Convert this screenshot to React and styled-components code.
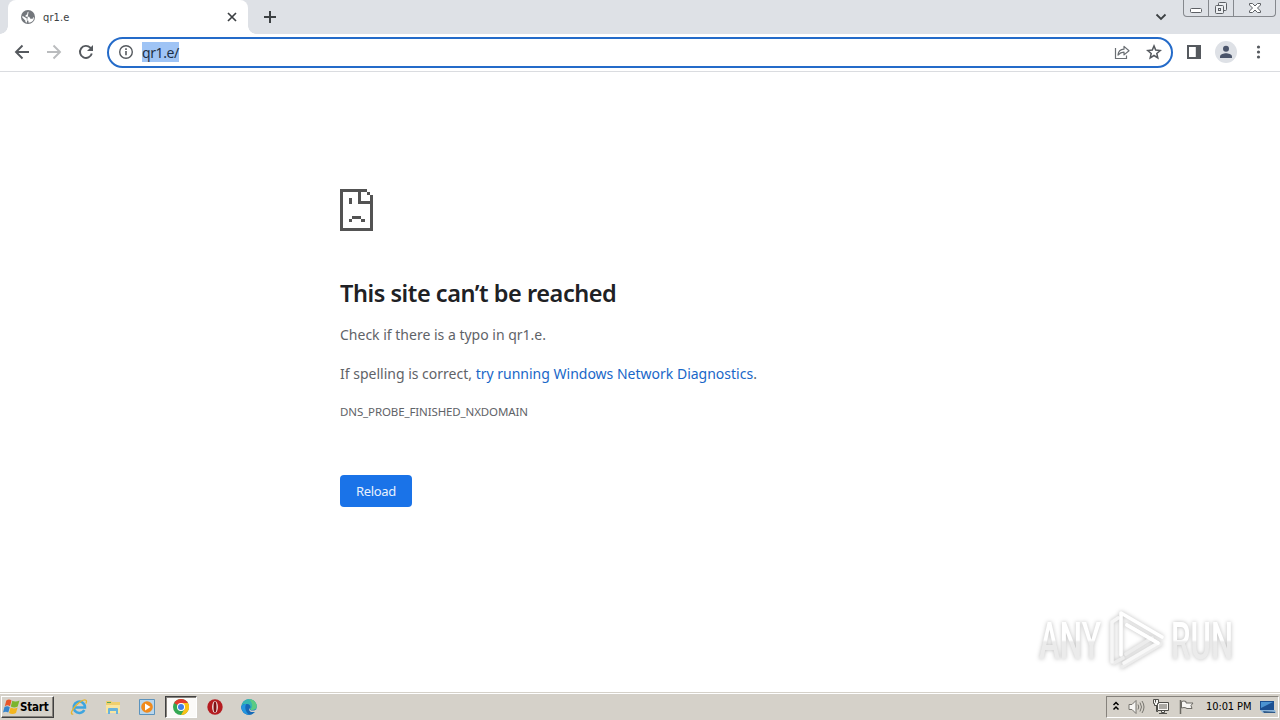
import styled, { createGlobalStyle } from 'styled-components';

const GlobalStyle = createGlobalStyle`
  * {
    box-sizing: border-box;
  }
  body {
    margin: 0;
    overflow: hidden;
    background: #fff;
  }
  svg {
    display: block;
    flex: none;
  }
`;

const ui = `'Noto Sans', 'Open Sans', sans-serif`;
const tahoma = `'DejaVu Sans Condensed', 'DejaVu Sans', sans-serif`;

const Screen = styled.div`
  display: flex;
  flex-direction: column;
  width: 1280px;
  height: 720px;
  font-family: ${ui};
`;

const TabStrip = styled.header`
  display: flex;
  height: 34px;
  padding-left: 8px;
  background: #dee1e6;
`;

const Tab = styled.div`
  position: relative;
  display: flex;
  align-items: center;
  width: 240px;
  padding: 0 9px 0 12px;
  background: #fff;
  border-radius: 8px 8px 0 0;

  &::before,
  &::after {
    content: '';
    position: absolute;
    bottom: 0;
    width: 8px;
    height: 8px;
  }
  &::before {
    left: -8px;
    background: radial-gradient(circle at 0 0, transparent 7.5px, #fff 8px);
  }
  &::after {
    right: -8px;
    background: radial-gradient(circle at 100% 0, transparent 7.5px, #fff 8px);
  }
`;

const TabTitle = styled.span`
  flex: 1;
  margin-left: 7px;
  padding-top: 1px;
  font-family: ${tahoma};
  font-size: 11px;
  line-height: 14px;
  letter-spacing: 0.1px;
  color: #3c4043;
`;

const NewTab = styled.div`
  display: flex;
  align-items: center;
  margin-left: 14px;
`;

const StripEnd = styled.div`
  display: flex;
  align-items: flex-start;
  gap: 14px;
  margin-left: auto;
  padding-right: 4px;
`;

const Chevron = styled.div`
  padding-top: 9px;
`;

const WindowButtons = styled.div`
  display: flex;
  width: 93px;
  height: 17px;
  border: 1px solid #85888d;
  border-top: 0;
  border-radius: 0 0 4px 4px;
`;

const WindowButton = styled.div`
  display: flex;
  justify-content: center;
  width: ${(props) => props.$width}px;

  & + & {
    border-left: 1px solid #85888d;
  }
`;

const Toolbar = styled.div`
  display: flex;
  align-items: center;
  height: 38px;
  padding: 0 12px;
  border-bottom: 1px solid #dadce0;
`;

const Nav = styled.div`
  display: flex;
  gap: 12px;
  margin-right: 11px;
  padding-bottom: 2px;
`;

const AddressBar = styled.div`
  display: flex;
  align-items: center;
  width: 1066px;
  height: 31px;
  padding: 0 8px 1px 9px;
  border: 2px solid #246bc9;
  border-radius: 16px;
`;

const Url = styled.span`
  height: 20px;
  margin: 0 auto 0 8px;
  font-size: 14px;
  line-height: 21px;
  letter-spacing: -0.42px;
  color: #1d3045;
  background: #9fc4f5;
`;

const AddressActions = styled.div`
  display: flex;
  gap: 14px;
`;

const ToolbarEnd = styled.div`
  display: flex;
  align-items: center;
  margin-left: 12px;
  padding-bottom: 1px;
  gap: 12px;
`;

const Page = styled.main`
  flex: 1;
  padding: 117px 0 0 340px;
  color: #5f6368;
`;

const Title = styled.h1`
  margin: 46px 0 0;
  font-size: 23.5px;
  font-weight: 600;
  line-height: 32px;
  letter-spacing: -0.45px;
  color: #202124;
`;

const Line = styled.p`
  margin: ${(props) => props.$top}px 0 0;
  font-size: 14px;
  line-height: 24px;
`;

const Link = styled.a`
  color: #1967c8;
`;

const ErrorCode = styled.div`
  margin-top: 16px;
  font-size: 11.5px;
  line-height: 20px;
  letter-spacing: -0.12px;
`;

const Reload = styled.button`
  display: block;
  width: 72px;
  height: 32px;
  margin-top: 53px;
  padding: 0;
  border: 0;
  border-radius: 4px;
  background: #1a73e8;
  color: #e8f1fd;
  font-family: ${ui};
  font-size: 13px;
  letter-spacing: -0.3px;
`;

const Watermark = styled.div`
  position: absolute;
  left: 1037px;
  top: 605px;
  display: flex;
  align-items: flex-start;
  gap: 4px;
  filter: drop-shadow(0 0 2px rgba(0, 0, 0, 0.26));
`;

const Taskbar = styled.footer`
  display: flex;
  align-items: center;
  height: 28px;
  padding: 0 0 0 1px;
  background: #d5d1c9;
  border-top: 1px solid #d5d1c9;
  box-shadow: inset 0 1px #fff;
`;

const StartButton = styled.div`
  display: flex;
  align-items: center;
  width: 53px;
  height: 22px;
  padding-left: 1px;
  border: 1px solid;
  border-color: #fff #404040 #404040 #fff;
  box-shadow: inset -1px -1px #86827c;
  font: bold 11.5px/14px ${tahoma};
  letter-spacing: -0.2px;
  color: #000;
`;

const Launchers = styled.div`
  display: flex;
  align-items: center;
  margin-left: 9px;
  gap: 2px;
`;

const Launcher = styled.div`
  display: flex;
  align-items: center;
  justify-content: center;
  width: 32px;
  height: 22px;
  border: 1px solid transparent;
  ${(props) =>
    props.$active &&
    `
    background: #fbfaf8;
    border-color: #404040 #fff #fff #404040;
    box-shadow: inset 1px 1px #86827c;
  `}
`;

const Tray = styled.div`
  display: flex;
  align-items: center;
  width: 173px;
  height: 22px;
  margin: 0 1px 0 auto;
  padding-left: 5px;
  border: 1px solid;
  border-color: #86827c #fff #fff #86827c;
`;

const TrayIcons = styled.div`
  display: flex;
  align-items: center;
  gap: 8px;
`;

const Clock = styled.span`
  width: 47px;
  margin: 0 6px 0 11px;
  padding-top: 1px;
  font: 11px/14px ${tahoma};
  letter-spacing: -0.1px;
  color: #000;
  white-space: nowrap;
`;

const Globe = () => (
  <svg width="16" height="16" viewBox="0 0 16 16">
    <circle cx="8" cy="8" r="7" fill="#73777c" />
    <path
      d="M8.600 2.400 7.200 3.800l.2 1.400-1.800 1v1.500h3.600l1.200 2h2.200l1-1.700.4.500a5.800 5.800 0 0 1-5.400 5.300l-.2-2-1.600-.6V9.400L3.200 7.300l-1-.1.100 1.200 3 3 .2 1.700 1.300.6"
      fill="#fff"
    />
  </svg>
);

const Close = () => (
  <svg width="14" height="14" viewBox="0 0 14 14" stroke="#3c4043" strokeWidth="1.7">
    <path d="m3 3 8 8M11 3l-8 8" />
  </svg>
);

const Plus = () => (
  <svg width="16" height="16" viewBox="0 0 16 16" stroke="#3c4043" strokeWidth="2">
    <path d="M8 2v12M2 8h12" />
  </svg>
);

const Arrow = ({ color, back }) => (
  <svg width="20" height="20" viewBox="0 0 20 20" fill="none" stroke={color} strokeWidth="1.9">
    <path d={back ? 'M17 10H4M10.500 3.500 4 10l6.500 6.500' : 'M3 10h13M9.500 3.500 16 10l-6.500 6.500'} />
  </svg>
);

const ReloadIcon = () => (
  <svg width="20" height="20" viewBox="0 0 20 20" fill="none" stroke="#55595e" strokeWidth="1.9">
    <path d="M15.800 11.500a6 6 0 1 1-1.500-5.800L16 7.400" />
    <path d="M17 3v6h-6z" fill="#55595e" stroke="none" />
  </svg>
);

const Info = () => (
  <svg width="16" height="16" viewBox="0 0 16 16" fill="none" stroke="#55595e">
    <circle cx="8" cy="8" r="6.3" strokeWidth="1.4" />
    <path d="M8 7v4.300M8 4.200v1.700" strokeWidth="1.6" />
  </svg>
);

const Share = () => (
  <svg width="18" height="18" viewBox="0 0 18 18" fill="none" stroke="#6b6f74" strokeWidth="1.2">
    <path d="M2.500 5v10.500h11v-3" />
    <path d="M5 12c.3-3.800 2.500-5.600 6-5.800V3.400l5 4.300-5 4.200V9.200c-2.800 0-4.300.9-6 2.800Z" strokeLinejoin="round" />
  </svg>
);

const Star = () => (
  <svg width="18" height="18" viewBox="0 0 18 18" fill="none" stroke="#55595e" strokeWidth="1.5">
    <path d="m9 2.900 1.700 4.200 4.500.4-3.400 3 1 4.400L9 12.500l-3.800 2.400 1-4.400-3.400-3 4.500-.4Z" />
  </svg>
);

const SidePanel = () => (
  <svg width="18" height="18" viewBox="0 0 18 18">
    <path d="M2 2h14v14H2zM4 4v10h6.800V4z" fill="#55595e" fillRule="evenodd" />
  </svg>
);

const Profile = () => (
  <svg width="22" height="22" viewBox="0 0 22 22">
    <circle cx="11" cy="11" r="11" fill="#dee1e6" />
    <circle cx="11" cy="7.8" r="3" fill="#4b556b" />
    <path d="M5 17v-1.600c0-2 4-3.200 6-3.200s6 1.200 6 3.200V17z" fill="#4b556b" />
  </svg>
);

const Menu = () => (
  <svg width="18" height="18" viewBox="0 0 18 18" fill="#55595e">
    <circle cx="9.5" cy="4" r="1.6" />
    <circle cx="9.5" cy="9" r="1.6" />
    <circle cx="9.5" cy="14" r="1.6" />
  </svg>
);

const SadPage = () => (
  <svg width="33" height="42" viewBox="0 0 33 42" fill="#535353" shapeRendering="crispEdges">
    <path d="M0 0h27v3h-6v9h12v30H0zM3 3v36h27V15H18V3z" fillRule="evenodd" />
    <path d="M27 3h3v3h-3zM30 6h3v6h-3zM9 9h3v6H9zM12 27h9v3h-9zM9 30h3v3H9zM21 30h4v3h-4z" />
  </svg>
);

const WatermarkWord = ({ children }) => (
  <svg width="66" height="74" viewBox="0 0 66 74">
    <defs>
      <linearGradient id="word" gradientUnits="userSpaceOnUse" x1="0" y1="35" x2="0" y2="37">
        <stop offset="0" stopColor="#fff" />
        <stop offset="1" stopColor="#ebebeb" />
      </linearGradient>
    </defs>
    <text
      transform="translate(2 54) scale(0.62 1) translate(0 -54)"
      x="0"
      y="54"
      textLength="100"
      lengthAdjust="spacingAndGlyphs"
      fontFamily="Roboto, sans-serif"
      fontSize="51"
      fontWeight="500"
      fill="url(#word)"
    >
      {children}
    </text>
  </svg>
);

const WatermarkPlay = () => (
  <svg width="58" height="66" viewBox="0 0 58 66" fill="none" strokeWidth="3.600" strokeLinejoin="round" strokeLinecap="round">
    <path d="M15 62 54 39M7 58l9-5M19 49l26-16" stroke="#ececec" />
    <path d="M5 57V17l6-4" stroke="#f6f6f6" />
    <path d="M14 50V8l41 24" stroke="#fff" />
    <path d="m20 20 31 18-34 20" stroke="#f8f8f8" />
    <path d="m20 20 31 18" stroke="#fff" />
  </svg>
);

const WindowsFlag = () => (
  <svg width="17" height="16" viewBox="0 0 17 16">
    <path d="M3.300 1.500C5.300 0 7 .4 8.500 1.400L7 7.300C5.200 6 3.700 6.100 1.800 7.200z" fill="#e9562a" />
    <path d="M9.300 1.800c2 1.200 4.600 1 7.200-.2l-1.800 6c-2.500 1.300-4.800 1.100-6.900 0z" fill="#7bb52e" />
    <path d="M1.500 8c2-1.200 3.600-1 5.300.2l-1.500 5.400C3.600 12.500 2 12.500 0 13.500z" fill="#3685cd" />
    <path d="M7.600 8.600c2 1.200 4.500 1 7-.1L13 14c-2.500 1.300-4.900 1.100-7 0z" fill="#f3b51e" />
  </svg>
);

const Explorer = () => (
  <svg width="18" height="18" viewBox="0 0 18 18" fill="none">
    <path d="M14.300 12A5.700 5.700 0 1 1 15 9.500H5" stroke="#3ea5df" strokeWidth="2.500" />
    <path d="M3.200 15.800c-2 1-2.500-.8-.6-4C5.500 7 13 .500 15.900 2.300c1 .7.6 2.100-.2 3.200" stroke="#e6b52e" strokeWidth="1.300" />
  </svg>
);

const Folder = () => (
  <svg width="18" height="18" viewBox="0 0 18 18">
    <path d="M2 3h5l1 1h8v10H2z" fill="#efcf6d" />
    <path d="M3 4h4v1H3z" fill="#57a65a" />
    <path d="M2 7h14v8H2z" fill="#f8e5a0" />
    <path d="M4 16v-5q0-1 1-1h8q1 0 1 1v5h-2v-3H6v3z" fill="#68b3dc" />
  </svg>
);

const MediaPlayer = () => (
  <svg width="18" height="18" viewBox="0 0 18 18">
    <path d="M1.500 1.500h15v15h-15z" fill="#b9d6ec" stroke="#5b93bd" />
    <circle cx="9" cy="9" r="5.8" fill="#f08a1c" />
    <path d="m7 5.500 5.500 3.500L7 12.500z" fill="#fff" />
  </svg>
);

const Chrome = () => (
  <svg width="16" height="16" viewBox="0 0 16 16">
    <circle cx="8" cy="8" r="8" fill="#34a853" />
    <path d="M8 8 1.100 4A8 8 0 0 1 15 4H8z" fill="#e33b2e" />
    <path d="M8 4h7a8 8 0 0 1-7 12l3.500-6z" fill="#fbc116" />
    <circle cx="8" cy="8" r="4" fill="#fff" />
    <circle cx="8" cy="8" r="3" fill="#3f7fe8" />
  </svg>
);

const Opera = () => (
  <svg width="16" height="16" viewBox="0 0 16 16">
    <circle cx="8" cy="8" r="7.7" fill="#b51c20" />
    <ellipse cx="8" cy="8" rx="2.900" ry="6.100" fill="#f3e5e3" />
    <ellipse cx="8" cy="8" rx="1.500" ry="5.600" fill="#7f1115" />
  </svg>
);

const Edge = () => (
  <svg width="16" height="16" viewBox="0 0 16 16">
    <circle cx="8" cy="8" r="7.7" fill="#1686d0" />
    <path d="M.4 8C1 2.800 4.200.3 8 .3c4.300 0 7.700 3 7.700 6.700 0 2.700-2 4-4.400 4-1.700 0-2.800-.7-2.300-1.500C10.500 7 8 5 5.500 5S1 6.200.4 8Z" fill="#36b6b0" />
    <path d="M8 .3c4.300 0 7.700 3 7.700 6.700 0 2.700-2 4-4.400 4-1 0-1.700-.2-2.100-.6C12 9 12 4 8 .3Z" fill="#5bcb83" />
    <path d="M.4 7.500C1.500 5.600 3.500 5 5.300 5c3 0 4.700 2 3.800 4-1 1 .2 2.300 2.300 2.300 1.400 0 2.600-.4 3.300-.9C13.400 14 11 15.700 8 15.700 3.500 15.700.2 12 .4 7.500Z" fill="#1768b5" />
    <path d="M.4 7.500C1.500 5.600 3.500 5 5.300 5 3.500 7 4 12.500 8 15.700 3.500 15.700.2 12 .4 7.500Z" fill="#2396df" />
    <path d="M8.900 8.500c-1.500 2.800 2.300 4 6.200 2.100h1V13h-3c-3.500.6-6.500-1.500-4.200-4.500Z" fill="#d5d1c9" />
  </svg>
);

const Expand = () => (
  <svg width="8" height="14" viewBox="0 0 8 14" fill="none" stroke="#000" strokeWidth="1.5">
    <path d="m1.500 5 2.500-2.500L6.500 5M1.500 9.500 4 7l2.500 2.500" />
  </svg>
);

const Speaker = () => (
  <svg width="17" height="16" viewBox="0 0 17 16" fill="none" stroke="#77756f">
    <path d="M1 5.500h3l4-4v13l-4-4H1z" fill="#f7f6f3" />
    <path d="M10 5.500q1.500 2.500 0 5M12 3.500q3 4.500 0 9M14 2q4 6 0 12" />
  </svg>
);

const Network = () => (
  <svg width="17" height="16" viewBox="0 0 17 16" stroke="#4f4e4a" fill="#f7f6f3">
    <path d="M4.500 3.500h11v8h-11zM8.500 11.500h3v2h-3zM6 14.500h8" />
    <path d="M6 5h8v5H6z" fill="#aaa8a3" stroke="none" />
    <path d="M.500.500h5v4h-1v2h-3v-2h-1z" />
    <path d="M3.500 6.500v6h1.500M2.500.500v3" fill="none" />
  </svg>
);

const Flag = () => (
  <svg width="17" height="16" viewBox="0 0 17 16" stroke="#6b6963">
    <path d="M2.500 1v14" strokeWidth="1.500" />
    <path d="M3.500 2.500q2.500-1 4.500 0v1.500h7l-2 2.500 1 3H8.500V9q-2.500-1-5 0z" fill="#f7f6f3" />
  </svg>
);

const Desktop = () => (
  <svg width="17" height="16" viewBox="0 0 17 16">
    <path d="M1 2h14v9H1z" fill="#1c4f91" />
    <path d="M2 3h12L2 9z" fill="#4c93d1" />
    <path d="M1 11h15l1 3H4z" fill="#8fb6d8" />
    <path d="m4 12 12 1v1H5z" fill="#305a88" />
  </svg>
);

const App = () => (
  <Screen>
    <GlobalStyle />
    <TabStrip>
      <Tab>
        <Globe />
        <TabTitle>qr1.e</TabTitle>
        <Close />
      </Tab>
      <NewTab>
        <Plus />
      </NewTab>
      <StripEnd>
        <Chevron>
          <svg width="16" height="16" viewBox="0 0 16 16" fill="none" stroke="#3c4043" strokeWidth="1.800">
            <path d="m3.500 5.500 4.500 4.500 4.500-4.500" />
          </svg>
        </Chevron>
        <WindowButtons>
          <WindowButton $width={24}>
            <svg width="14" height="16" viewBox="0 0 14 16" fill="#fff" stroke="#5d6065">
              <rect x="1.500" y="8.500" width="11" height="4" rx="1" />
            </svg>
          </WindowButton>
          <WindowButton $width={25}>
            <svg width="14" height="16" viewBox="0 0 14 16" fill="#eceef1" stroke="#5d6065">
              <rect x="4.500" y="2.500" width="8" height="8" rx="1" />
              <rect x="1.500" y="5.500" width="8" height="8" rx="1" />
              <rect x="4.500" y="8.500" width="2" height="2" />
            </svg>
          </WindowButton>
          <WindowButton $width={42}>
            <svg width="14" height="16" viewBox="0 0 14 16" fill="#fff" stroke="#5d6065">
              <path d="M1.500 3.500h3L7 6l2.500-2.500h3V5L9.500 8l3 3v1.500h-3L7 10l-2.500 2.500h-3V11l3-3-3-3z" />
            </svg>
          </WindowButton>
        </WindowButtons>
      </StripEnd>
    </TabStrip>
    <Toolbar>
      <Nav>
        <Arrow color="#55595e" back />
        <Arrow color="#babcbe" />
        <ReloadIcon />
      </Nav>
      <AddressBar>
        <Info />
        <Url>qr1.e/</Url>
        <AddressActions>
          <Share />
          <Star />
        </AddressActions>
      </AddressBar>
      <ToolbarEnd>
        <SidePanel />
        <Profile />
        <Menu />
      </ToolbarEnd>
    </Toolbar>
    <Page>
      <SadPage />
      <Title>This site can’t be reached</Title>
      <Line $top={14}>Check if there is a typo in qr1.e.</Line>
      <Line $top={15}>
        If spelling is correct, <Link>try running Windows Network Diagnostics</Link>.
      </Line>
      <ErrorCode>DNS_PROBE_FINISHED_NXDOMAIN</ErrorCode>
      <Reload>Reload</Reload>
    </Page>
    <Watermark>
      <WatermarkWord>ANY</WatermarkWord>
      <WatermarkPlay />
      <WatermarkWord>RUN</WatermarkWord>
    </Watermark>
    <Taskbar>
      <StartButton>
        <WindowsFlag />
        Start
      </StartButton>
      <Launchers>
        <Launcher><Explorer /></Launcher>
        <Launcher><Folder /></Launcher>
        <Launcher><MediaPlayer /></Launcher>
        <Launcher $active><Chrome /></Launcher>
        <Launcher><Opera /></Launcher>
        <Launcher><Edge /></Launcher>
      </Launchers>
      <Tray>
        <TrayIcons>
          <Expand />
          <Speaker />
          <Network />
          <Flag />
        </TrayIcons>
        <Clock>10:01 PM</Clock>
        <Desktop />
      </Tray>
    </Taskbar>
  </Screen>
);

export default App;
